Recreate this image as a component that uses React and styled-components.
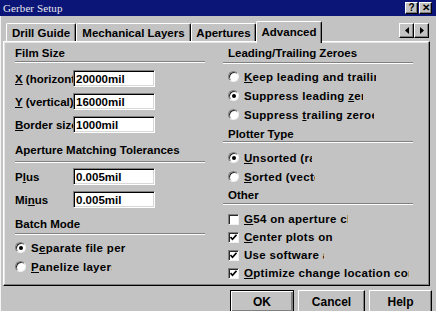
import React from 'react'
import styled, { createGlobalStyle } from 'styled-components'

const GlobalStyle = createGlobalStyle`
  html, body {
    margin: 0;
    padding: 0;
    background: #c3c3c3;
  }
  body {
    width: 436px;
    height: 311px;
    overflow: hidden;
    font-family: "Liberation Sans", Arial, sans-serif;
  }
`

const Window = styled.div`
  width: 436px;
  height: 311px;
  background: #c3c3c3;
  display: flex;
  flex-direction: column;
  overflow: hidden;
`

const TitleBar = styled.div`
  height: 16px;
  flex: none;
  background: #0b1577;
  display: flex;
  align-items: center;
  padding: 0 4px 0 3px;
`

const Caption = styled.span`
  font-family: "Liberation Serif", "Times New Roman", serif;
  font-size: 11px;
  color: #e8e8ee;
  letter-spacing: 0.1px;
`

const CapButtons = styled.div`
  margin-left: auto;
  display: flex;
  gap: 1px;
`

const CapButton = styled.div`
  width: 13px;
  height: 12px;
  box-sizing: border-box;
  background: #c3c3c3;
  border: 1px solid;
  border-color: #fff #000 #000 #fff;
  box-shadow: inset -1px -1px 0 #808080;
  display: flex;
  align-items: center;
  justify-content: center;
  font-size: 10px;
  font-weight: bold;
  line-height: 1;
  color: #000;
`

const Body = styled.div`
  flex: 1;
  display: flex;
  flex-direction: column;
  border-left: 1px solid #f4f4f4;
`

const TabRow = styled.div`
  height: 25px;
  flex: none;
  display: flex;
  align-items: flex-end;
  padding-left: 5px;
`

const Tab = styled.div`
  position: relative;
  z-index: ${p => (p.$active ? 2 : 0)};
  box-sizing: border-box;
  height: ${p => (p.$active ? 22 : 18)}px;
  margin-bottom: ${p => (p.$active ? -2 : 0)}px;
  width: ${p => p.$w}px;
  background: #c3c3c3;
  border-top: 1px solid #fff;
  border-left: 1px solid #fff;
  border-right: 1px solid #000;
  border-radius: 2px 2px 0 0;
  box-shadow: inset -1px 0 0 #808080;
  display: flex;
  align-items: ${p => (p.$active ? 'flex-start' : 'center')};
  justify-content: center;
  padding-top: ${p => (p.$active ? 4 : 0)}px;
  font-size: 11.5px;
  font-weight: bold;
  color: #000;
  white-space: nowrap;
`

const Arrows = styled.div`
  margin-left: auto;
  margin-right: 7px;
  align-self: flex-start;
  margin-top: 7px;
  display: flex;
`

const ArrowButton = styled.div`
  width: 15px;
  height: 15px;
  box-sizing: border-box;
  background: #c3c3c3;
  border: 1px solid;
  border-color: #fff #000 #000 #fff;
  box-shadow: inset -1px -1px 0 #808080;
  display: flex;
  align-items: center;
  justify-content: center;
`

const Panel = styled.div`
  flex: none;
  height: 245px;
  margin: 0 6px 0 2px;
  box-sizing: border-box;
  border-top: 1px solid #fff;
  border-left: 1px solid #fff;
  border-right: 1px solid #000;
  border-bottom: 1px solid #000;
  box-shadow: inset -1px -1px 0 #808080, inset 1px 1px 0 #e6e6e6;
  padding: 4px 0 0 11px;
  display: grid;
  grid-template-columns: 190px 190px;
  column-gap: 18px;
  align-items: start;
`

const Column = styled.div`
  display: flex;
  flex-direction: column;
  padding-left: ${p => p.$inset || 0}px;
`

const GroupTitle = styled.div`
  height: 14px;
  line-height: 14px;
  margin-top: ${p => p.$mt || 0}px;
  font-size: 11.5px;
  font-weight: bold;
  color: #000;
  white-space: nowrap;
`

const Rule = styled.div`
  height: 0;
  margin-top: ${p => p.$mt || 0}px;
  margin-left: -${p => p.$inset || 0}px;
  border-top: 1px solid #808080;
  border-bottom: 1px solid #fff;
`

const FieldRow = styled.div`
  height: 23px;
  margin-top: ${p => p.$mt || 0}px;
  display: flex;
  align-items: center;
`

const FieldLabel = styled.div`
  width: 58px;
  overflow: hidden;
  white-space: nowrap;
  font-size: 11.5px;
  font-weight: bold;
  color: #000;
`

const FieldInput = styled.input`
  width: 82px;
  height: 17px;
  box-sizing: border-box;
  margin: 0;
  padding: 0 0 0 2px;
  background: #fff;
  border: 1px solid;
  border-color: #808080 #fff #fff #808080;
  box-shadow: inset 1px 1px 0 #000, inset -1px -1px 0 #d8d8d8;
  font-family: "Liberation Sans", Arial, sans-serif;
  font-size: 11.5px;
  font-weight: bold;
  color: #000;
  outline: none;
`

const OptionRow = styled.div`
  height: ${p => p.$h || 19}px;
  margin-top: ${p => p.$mt || 0}px;
  display: flex;
  align-items: center;
  gap: 5px;
`

const OptionText = styled.div`
  width: ${p => p.$w}px;
  overflow: hidden;
  white-space: nowrap;
  font-size: 11.5px;
  font-weight: bold;
  letter-spacing: 0.3px;
  color: #000;
`

const RadioDot = styled.div`
  width: 11px;
  height: 11px;
  flex: none;
  box-sizing: border-box;
  border-radius: 50%;
  background: #fff;
  border: 1px solid;
  border-color: #808080 #f0f0f0 #f0f0f0 #808080;
  box-shadow: inset 1px 1px 0 #2a2a2a;
  display: flex;
  align-items: center;
  justify-content: center;
  &::after {
    content: '';
    width: 4px;
    height: 4px;
    border-radius: 50%;
    background: ${p => (p.$on ? '#000' : 'transparent')};
  }
`

const CheckBox = styled.div`
  width: 11px;
  height: 11px;
  flex: none;
  box-sizing: border-box;
  background: #fff;
  border: 1px solid;
  border-color: #808080 #f0f0f0 #f0f0f0 #808080;
  box-shadow: inset 1px 1px 0 #2a2a2a;
  display: flex;
  align-items: center;
  justify-content: center;
`

const Footer = styled.div`
  flex: 1;
  display: flex;
  justify-content: flex-end;
  gap: 4px;
  padding: 4px 4px 0 0;
`

const PushButton = styled.div`
  width: ${p => p.$w}px;
  height: 23px;
  box-sizing: border-box;
  background: #c3c3c3;
  border: 1px solid;
  border-color: ${p => (p.$default ? '#000' : '#fff #000 #000 #fff')};
  box-shadow: ${p =>
    p.$default
      ? 'inset 1px 1px 0 #fff, inset -2px -2px 0 #808080, inset -1px -1px 0 #000'
      : 'inset -1px -1px 0 #808080'};
  display: flex;
  align-items: center;
  justify-content: center;
  font-size: 12px;
  font-weight: bold;
  color: #000;
`

const Radio = ({ on, w, mt, children }) => (
  <OptionRow $mt={mt}>
    <RadioDot $on={on} />
    <OptionText $w={w}>{children}</OptionText>
  </OptionRow>
)

const Check = ({ on, w, mt, children }) => (
  <OptionRow $h={18} $mt={mt}>
    <CheckBox>
      {on && (
        <svg width="7" height="7" viewBox="0 0 7 7">
          <path d="M0.5 3 L2.5 5.2 L6.5 0.8" stroke="#000" strokeWidth="1.6" fill="none" />
        </svg>
      )}
    </CheckBox>
    <OptionText $w={w}>{children}</OptionText>
  </OptionRow>
)

const Field = ({ label, value, mt }) => (
  <FieldRow $mt={mt}>
    <FieldLabel>{label}</FieldLabel>
    <FieldInput readOnly value={value} />
  </FieldRow>
)

const Tri = ({ dir }) => (
  <svg width="4" height="7" viewBox="0 0 4 7">
    <path d={dir === 'left' ? 'M4 0 L0 3.5 L4 7 Z' : 'M0 0 L4 3.5 L0 7 Z'} fill="#000" />
  </svg>
)

export default function App() {
  return (
    <Window>
      <GlobalStyle />
      <TitleBar>
        <Caption>Gerber Setup</Caption>
        <CapButtons>
          <CapButton>?</CapButton>
          <CapButton>✕</CapButton>
        </CapButtons>
      </TitleBar>
      <Body>
        <TabRow>
          <Tab $w={70}>Drill Guide</Tab>
          <Tab $w={115}>Mechanical Layers</Tab>
          <Tab $w={65}>Apertures</Tab>
          <Tab $w={66} $active>Advanced</Tab>
          <Arrows>
            <ArrowButton><Tri dir="left" /></ArrowButton>
            <ArrowButton><Tri dir="right" /></ArrowButton>
          </Arrows>
        </TabRow>
        <Panel>
          <Column>
            <GroupTitle>Film Size</GroupTitle>
            <Rule $mt={1} />
            <Field mt={4} label={<><u>X</u> (horizontal)</>} value="20000mil" />
            <Field label={<><u>Y</u> (vertical)</>} value="16000mil" />
            <Field label={<><u>B</u>order size</>} value="1000mil" />
            <GroupTitle $mt={7}>Aperture Matching Tolerances</GroupTitle>
            <Rule $mt={4} />
            <Field mt={2} label={<>P<u>l</u>us</>} value="0.005mil" />
            <Field label={<>Mi<u>n</u>us</>} value="0.005mil" />
            <GroupTitle $mt={6}>Batch Mode</GroupTitle>
            <Rule $mt={2} />
            <Radio on mt={3} w={96}>S<u>e</u>parate file per layer</Radio>
            <Radio w={81}><u>P</u>anelize layers</Radio>
          </Column>
          <Column $inset={5}>
            <GroupTitle>Leading/Trailing Zeroes</GroupTitle>
            <Rule $mt={2} $inset={5} />
            <Radio mt={3} w={132}><u>K</u>eep leading and trailing zeroes</Radio>
            <Radio on w={119}>Suppress leading <u>z</u>eroes</Radio>
            <Radio w={130}>Suppress <u>t</u>railing zeroes</Radio>
            <GroupTitle $mt={3}>Plotter Type</GroupTitle>
            <Rule $inset={5} />
            <Radio on mt={5} w={68}><u>U</u>nsorted (raster)</Radio>
            <Radio w={71}><u>S</u>orted (vector)</Radio>
            <GroupTitle $mt={2}>Other</GroupTitle>
            <Rule $mt={1} $inset={5} />
            <Check mt={5} w={104}><u>G</u>54 on aperture change</Check>
            <Check on w={89}><u>C</u>enter plots on film</Check>
            <Check on w={80}>Use software arcs</Check>
            <Check on w={165}><u>O</u>ptimize change location commands</Check>
          </Column>
        </Panel>
        <Footer>
          <PushButton $w={64} $default>OK</PushButton>
          <PushButton $w={67}>Cancel</PushButton>
          <PushButton $w={63}>Help</PushButton>
        </Footer>
      </Body>
    </Window>
  )
}
